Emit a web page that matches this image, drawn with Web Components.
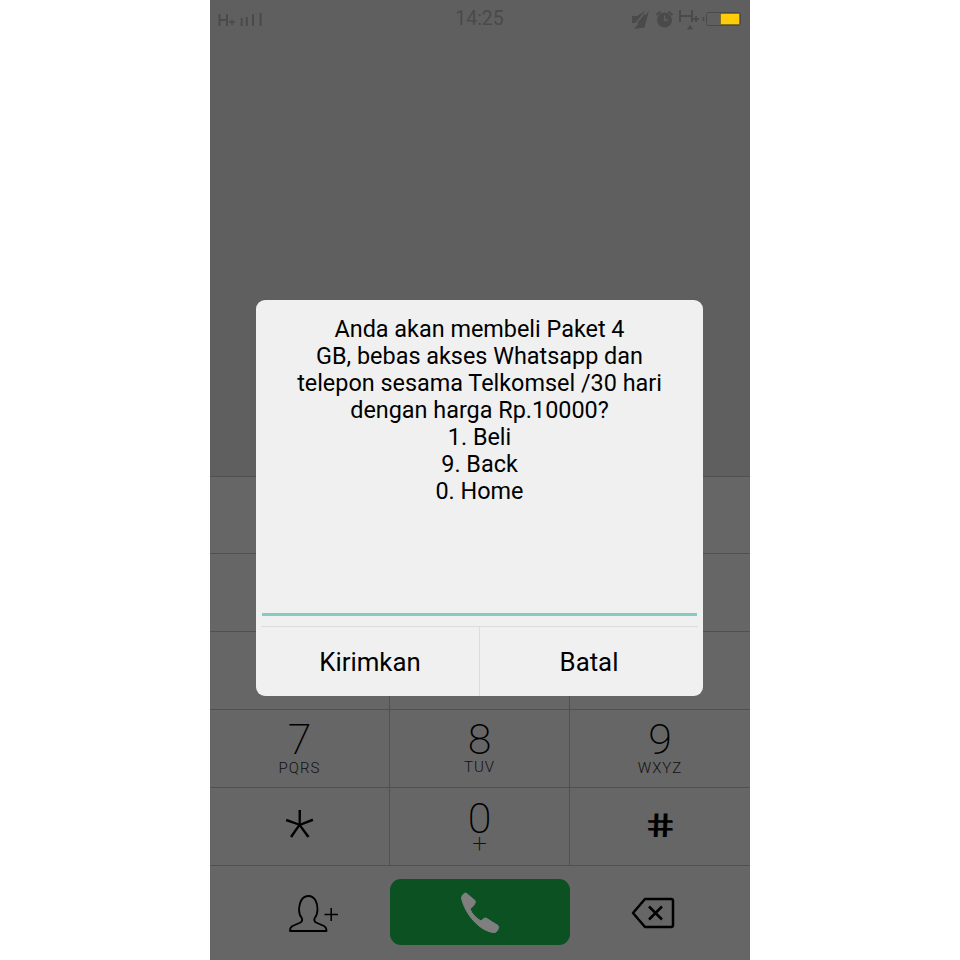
<!DOCTYPE html>
<html>
<head>
<meta charset="utf-8">
<title>Dialer</title>
<style>
html, body { margin: 0; padding: 0; background: #fff; }
body { display: flex; justify-content: center; font-family: Roboto, "Liberation Sans", sans-serif; }
</style>
</head>
<body>
<phone-screen>
	<status-bar slot="status"></status-bar>
	<dial-pad slot="pad">
		<dial-key></dial-key><dial-key></dial-key><dial-key></dial-key>
		<dial-key></dial-key><dial-key></dial-key><dial-key></dial-key>
		<dial-key></dial-key><dial-key></dial-key><dial-key></dial-key>
		<dial-key digit="7" letters="PQRS"></dial-key><dial-key digit="8" letters="TUV"></dial-key><dial-key digit="9" letters="WXYZ"></dial-key>
		<dial-key digit="*"></dial-key><dial-key digit="0" letters="+"></dial-key><dial-key digit="#"></dial-key>
	</dial-pad>
	<call-bar slot="call"></call-bar>
	<ussd-dialog slot="dialog" confirm="Kirimkan" cancel="Batal">Anda akan membeli Paket 4<br>GB, bebas akses Whatsapp dan<br>telepon sesama Telkomsel /30 hari<br>dengan harga Rp.10000?<br>1. Beli<br>9. Back<br>0. Home</ussd-dialog>
</phone-screen>
<script>
const screenTemplate = document.createElement('template');
screenTemplate.innerHTML = `
<style>
:host { display: flex; flex-direction: column; position: relative; width: 540px; height: 960px; background: #5f5f5f; overflow: hidden; }
.top { height: 476px; flex: none; }
::slotted([slot=dialog]) { position: absolute; left: 46px; top: 300px; }
</style>
<div class="top"><slot name="status"></slot></div>
<slot name="pad"></slot>
<slot name="call"></slot>
<slot name="dialog"></slot>`;

class PhoneScreen extends HTMLElement {
	constructor() {
		super();
		this.attachShadow({ mode: 'open' });
		this.shadowRoot.appendChild(screenTemplate.content.cloneNode(true));
	}
}
customElements.define('phone-screen', PhoneScreen);

const statusTemplate = document.createElement('template');
statusTemplate.innerHTML = `
<style>
:host { display: flex; align-items: center; justify-content: space-between; height: 36px; padding: 0 9px 0 8px; color: #4a4a4a; font-size: 19.500px; position: relative; }
.left, .right { display: flex; align-items: center; }
.time { position: absolute; left: -1px; right: 0; text-align: center; line-height: 37px; }
svg { display: block; }
</style>
<div class="left">
	<svg width="46" height="18" viewBox="0 0 46 18" fill="none" stroke="#4a4a4a">
		<path d="M1.500 5v12M9 5v12M1.500 11H9" stroke-width="2"/>
		<path d="M11 13h6M14 10.500v5.500" stroke-width="1.500"/>
		<path d="M23.700 9v8M28.800 8v9M35 5v12M42.600 4v13" stroke-width="2"/>
	</svg>
</div>
<div class="time">14:25</div>
<div class="right">
	<svg width="110" height="32" viewBox="0 0 110 32">
		<path d="M1 14h5l8-5v16l-8-4H1z" fill="#4a4a4a"/>
		<path d="M3 27L18 9l-4.500 16.500z" fill="#4a4a4a"/>
		<path d="M1 26L16 8" stroke="#5f5f5f" stroke-width="1.500"/>
		<circle cx="33.500" cy="18" r="7.500" fill="#4a4a4a"/>
		<path d="M25.500 13l4-3.500M41.500 13l-4-3.500" stroke="#4a4a4a" stroke-width="2.200"/>
		<path d="M33.500 13.500V18H37" stroke="#5f5f5f" stroke-width="1.300" fill="none"/>
		<path d="M49 8v12M61 8v12M49 14h12" stroke="#4a4a4a" stroke-width="2" fill="none"/>
		<path d="M62 17h6M65 14v6" stroke="#4a4a4a" stroke-width="1.800"/>
		<path d="M56 27.500l3-5 3 5z" fill="#4a4a4a"/>
		<path d="M72.500 15v4" stroke="#4a4a4a" stroke-width="1.500"/>
		<rect x="75.500" y="10.500" width="34" height="13" rx="2" fill="none" stroke="#4a4a4a"/>
		<rect x="89.500" y="11.500" width="19" height="11" fill="#ffcc0a" stroke="#5a4a10" stroke-width=".500"/>
	</svg>
</div>`;

class StatusBar extends HTMLElement {
	constructor() {
		super();
		this.attachShadow({ mode: 'open' });
		this.shadowRoot.appendChild(statusTemplate.content.cloneNode(true));
	}
}
customElements.define('status-bar', StatusBar);

const padTemplate = document.createElement('template');
padTemplate.innerHTML = `
<style>
:host { display: grid; flex: none; grid-template-columns: 180px 180px 180px; grid-template-rows: 77px repeat(4, 78px); background: #666; }
</style>
<slot></slot>`;

class DialPad extends HTMLElement {
	constructor() {
		super();
		this.attachShadow({ mode: 'open' });
		this.shadowRoot.appendChild(padTemplate.content.cloneNode(true));
	}
}
customElements.define('dial-pad', DialPad);

const keyTemplate = document.createElement('template');
keyTemplate.innerHTML = `
<style>
:host { display: flex; flex-direction: column; align-items: center; box-sizing: border-box; border-top: 1px solid #505050; border-right: 1px solid #505050; color: #000; }
:host(:nth-child(3n)) { border-right: 0; }
.digit { font-size: 43px; font-weight: 200; line-height: 36px; margin-top: 11px; }
.letters { font-size: 15px; font-weight: 300; letter-spacing: 1px; line-height: 16px; color: #111; margin-top: 3px; }
</style>
<div class="digit"></div>
<div class="letters"></div>`;

class DialKey extends HTMLElement {
	constructor() {
		super();
		this.attachShadow({ mode: 'open' });
		this.shadowRoot.appendChild(keyTemplate.content.cloneNode(true));
	}

	connectedCallback() {
		const digit = this.getAttribute('digit') || '';
		const letters = this.getAttribute('letters') || '';
		const digitEl = this.shadowRoot.querySelector('.digit');
		const lettersEl = this.shadowRoot.querySelector('.letters');
		digitEl.textContent = digit;
		lettersEl.textContent = letters;
		if (letters === 'TUV') lettersEl.style.marginTop = '2px';
		if (letters === '+') {
			digitEl.style.marginTop = '12px';
			lettersEl.style.fontSize = '26px';
			lettersEl.style.lineHeight = '18px';
			lettersEl.style.fontWeight = '200';
			lettersEl.style.letterSpacing = '0';
			lettersEl.style.marginTop = '-2px';
		}
		if (digit === '*') {
			digitEl.style.fontSize = '70px';
			digitEl.style.fontWeight = '200';
			digitEl.style.lineHeight = '68px';
			digitEl.style.marginTop = '14px';
		}
		if (digit === '#') {
			digitEl.style.fontSize = '33px';
			digitEl.style.fontWeight = '500';
			digitEl.style.lineHeight = '40px';
			digitEl.style.marginTop = '18px';
			digitEl.style.transform = 'scaleX(1.45) skewX(9deg)';
		}
	}
}
customElements.define('dial-key', DialKey);

const callTemplate = document.createElement('template');
callTemplate.innerHTML = `
<style>
:host { display: grid; flex: none; grid-template-columns: 180px 180px 180px; align-items: center; justify-items: center; box-sizing: border-box; height: 95px; border-top: 1px solid #505050; background: #666; padding-bottom: 2px; }
.call { width: 180px; height: 66px; border-radius: 11px; background: #0b5121; display: flex; align-items: center; justify-content: center; }
svg { display: block; }
</style>
<svg width="50" height="40" viewBox="0 0 50 40" fill="none" stroke="#000" stroke-width="1.800" style="margin-left:27px;margin-top:1px">
	<path d="M1 38c0-2.500.5-4 2.500-5l8-3.500c1.500-1 2-2.500 1.500-4-2-2.500-3-5.500-3-9C10.500 10 13 3 19.500 3s9 7 9 13.500c0 3.500-1 6.500-3 9-.5 1.500 0 3 1.500 4l8 3.500c2 1 2.500 2.500 2.500 5z" stroke-linejoin="round"/>
	<path d="M35.500 21.500H49M42.200 15v13" stroke-width="1.500"/>
</svg>
<div class="call">
	<svg width="42" height="42" viewBox="0 0 42 42">
		<path d="M2.500 7C3 4 5 2 7 2l9 7.500c1 1.500 0 4.500-5 8.500 2 5 6 9 11 12 2-2 3-3 5-3l12 7.500c2 1.500-1 7.500-4 7C22 41 6 24 2.500 7z" fill="#7f7f7f" stroke="#7f7f7f" stroke-width="1" stroke-linejoin="round"/>
	</svg>
</div>
<svg width="44" height="32" viewBox="0 0 44 32" fill="none" stroke="#000" stroke-width="2.500" style="margin-right:15px;margin-top:1px">
	<path d="M14 2h26c1.500 0 2 .5 2 2v24c0 1.500-.5 2-2 2H14L2 16z" stroke-linejoin="round"/>
	<path d="M18 9.500l13 13M31 9.500l-13 13"/>
</svg>`;

class CallBar extends HTMLElement {
	constructor() {
		super();
		this.attachShadow({ mode: 'open' });
		this.shadowRoot.appendChild(callTemplate.content.cloneNode(true));
	}
}
customElements.define('call-bar', CallBar);

const dialogTemplate = document.createElement('template');
dialogTemplate.innerHTML = `
<style>
:host { display: flex; flex-direction: column; box-sizing: border-box; width: 447px; height: 396px; background: #f0f0f0; border-radius: 9px; color: #000; }
.message { height: 313px; box-sizing: border-box; padding-top: 16px; text-align: center; font-size: 23.400px; line-height: 27px; }
.input { height: 3px; margin: 0 6px; background: #85cbc3; }
.actions { display: flex; flex: 1; margin: 10px 5px 0; border-top: 1px solid #dcdcdc; }
.action { flex: 1; display: flex; align-items: center; justify-content: center; font-size: 25.800px; padding-top: 1px; }
.action + .action { border-left: 1px solid #dcdcdc; }
</style>
<div class="message"><slot></slot></div>
<div class="input"></div>
<div class="actions">
	<div class="action confirm"></div>
	<div class="action cancel"></div>
</div>`;

class UssdDialog extends HTMLElement {
	constructor() {
		super();
		this.attachShadow({ mode: 'open' });
		this.shadowRoot.appendChild(dialogTemplate.content.cloneNode(true));
	}

	connectedCallback() {
		this.shadowRoot.querySelector('.confirm').textContent = this.getAttribute('confirm');
		this.shadowRoot.querySelector('.cancel').textContent = this.getAttribute('cancel');
	}
}
customElements.define('ussd-dialog', UssdDialog);
</script>
</body>
</html>
